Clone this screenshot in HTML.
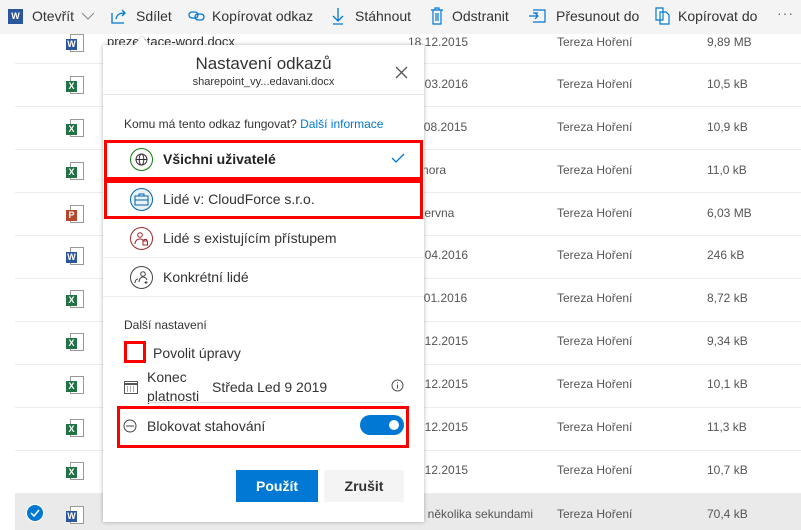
<!DOCTYPE html>
<html><head><meta charset="utf-8"><style>
*{margin:0;padding:0;box-sizing:border-box}
body{width:801px;height:530px;overflow:hidden;background:#fff;font-family:"Liberation Sans",sans-serif;color:#333;position:relative;font-size:13px}
.a{position:absolute;white-space:nowrap}
.tb{position:absolute;left:0;top:0;width:801px;height:34px;background:#f4f4f4;z-index:2}
.tb .a{top:8px;font-size:14px;color:#333}
.div{position:absolute;left:15px;width:786px;height:1px;background:#ececec}
.ic{position:absolute;width:14px;height:18px;border:1px solid #999;background:#fff}
.ic b{position:absolute;left:-5px;top:4px;width:11px;height:11px;color:#fff;font-size:9px;font-weight:bold;text-align:center;line-height:11px}
.cell{position:absolute;font-size:12px;color:#555}
.dlg{position:absolute;left:103px;top:45px;width:321px;height:477px;background:#fff;box-shadow:0 0 4px rgba(0,0,0,.3)}
.red{position:absolute;border:3px solid #f00}
.circ{position:absolute;width:23px;height:23px;border-radius:50%;border:1.5px solid}
</style></head><body>
<div class="tb">
<div class="a" style="left:8px;top:9px;width:15px;height:15px;background:#2b579a;color:#fff;font-size:9px;font-weight:bold;text-align:center;line-height:15px">W</div>
<div class="a" style="left:32px">Otevřít</div>
<svg class="a" style="left:81px;top:12px" width="14" height="8"><path d="M1 1l6 6 6-6" stroke="#888" fill="none"/></svg>
<svg class="a" style="left:111px;top:8px" width="16" height="16"><path d="M1 5v10h12M5 11c1-5 4-6 9-6M11 2l3 3-3 3" stroke="#0078d4" fill="none" stroke-width="1.3"/></svg>
<div class="a" style="left:136px">Sdílet</div>
<svg class="a" style="left:188px;top:11px" width="18" height="10"><rect x="1" y="1" width="9" height="6" rx="3" stroke="#0078d4" fill="none" stroke-width="1.3"/><rect x="7" y="3" width="9" height="6" rx="3" stroke="#0078d4" fill="none" stroke-width="1.3"/></svg>
<div class="a" style="left:212px">Kopírovat odkaz</div>
<svg class="a" style="left:332px;top:7px" width="12" height="18"><path d="M6 1v13M1 9l5 5 5-5M1 17h10" stroke="#0078d4" fill="none" stroke-width="1.3"/></svg>
<div class="a" style="left:355px">Stáhnout</div>
<svg class="a" style="left:430px;top:7px" width="14" height="18"><path d="M1 3h12M5 3V1h4v2M3 3v14h8V3M6 6v8M8 6v8" stroke="#0078d4" fill="none" stroke-width="1.2"/></svg>
<div class="a" style="left:452px">Odstranit</div>
<svg class="a" style="left:528px;top:9px" width="18" height="14"><path d="M5 1h12v12H5M1 7h9M7 4l3 3-3 3M5 4h5" stroke="#0078d4" fill="none" stroke-width="1.2"/></svg>
<div class="a" style="left:556px">Přesunout do</div>
<svg class="a" style="left:655px;top:7px" width="16" height="18"><path d="M1 1h7v12H1zM5 5h6l3 3v9H5z" stroke="#0078d4" fill="#fff" stroke-width="1.2"/></svg>
<div class="a" style="left:678px">Kopírovat do</div>
<div class="a" style="left:777px;top:5px;color:#666;letter-spacing:1px">···</div>
</div>

<div class="div" style="top:63px"></div><div class="div" style="top:106px"></div><div class="div" style="top:149px"></div><div class="div" style="top:192px"></div><div class="div" style="top:235px"></div><div class="div" style="top:278px"></div><div class="div" style="top:321px"></div><div class="div" style="top:364px"></div><div class="div" style="top:407px"></div><div class="div" style="top:450px"></div>
<div class="a" style="left:15px;top:493px;width:786px;height:37px;background:#eaeaea"></div>
<div class="a" style="left:26px;top:504px;width:18px;height:18px;border-radius:50%;background:#0078d4;border:1px solid #fff"></div>
<svg class="a" style="left:29px;top:508px" width="12" height="10"><path d="M2 5l3 3 5-6" stroke="#fff" fill="none" stroke-width="1.5"/></svg>

<div class="ic" style="left:70px;top:34px"><b style="background:#2b579a">W</b></div>
<div class="ic" style="left:70px;top:76px"><b style="background:#217346">X</b></div>
<div class="ic" style="left:70px;top:119px"><b style="background:#217346">X</b></div>
<div class="ic" style="left:70px;top:162px"><b style="background:#217346">X</b></div>
<div class="ic" style="left:70px;top:205px"><b style="background:#b7472a">P</b></div>
<div class="ic" style="left:70px;top:247px"><b style="background:#2b579a">W</b></div>
<div class="ic" style="left:70px;top:290px"><b style="background:#217346">X</b></div>
<div class="ic" style="left:70px;top:333px"><b style="background:#217346">X</b></div>
<div class="ic" style="left:70px;top:376px"><b style="background:#217346">X</b></div>
<div class="ic" style="left:70px;top:419px"><b style="background:#217346">X</b></div>
<div class="ic" style="left:70px;top:462px"><b style="background:#217346">X</b></div>
<div class="ic" style="left:70px;top:506px"><b style="background:#2b579a">W</b></div>

<div class="cell" style="left:107px;top:34px;font-size:13px;color:#333">prezentace-word.docx</div>
<div class="cell" style="left:408px;top:35px">18.12.2015</div>
<div class="cell" style="left:408px;top:77px">15.03.2016</div>
<div class="cell" style="left:408px;top:120px">11.08.2015</div>
<div class="cell" style="left:402px;top:163px">3. února</div>
<div class="cell" style="left:405px;top:206px">2. června</div>
<div class="cell" style="left:408px;top:248px">14.04.2016</div>
<div class="cell" style="left:408px;top:291px">11.01.2016</div>
<div class="cell" style="left:408px;top:334px">18.12.2015</div>
<div class="cell" style="left:408px;top:377px">18.12.2015</div>
<div class="cell" style="left:408px;top:420px">18.12.2015</div>
<div class="cell" style="left:408px;top:463px">18.12.2015</div>
<div class="cell" style="left:399px;top:507px">Před několika sekundami</div>
<div class="cell" style="left:557px;top:35px">Tereza Hoření</div><div class="cell" style="left:707px;top:35px">9,89 MB</div>
<div class="cell" style="left:557px;top:77px">Tereza Hoření</div><div class="cell" style="left:707px;top:77px">10,5 kB</div>
<div class="cell" style="left:557px;top:120px">Tereza Hoření</div><div class="cell" style="left:707px;top:120px">10,9 kB</div>
<div class="cell" style="left:557px;top:163px">Tereza Hoření</div><div class="cell" style="left:707px;top:163px">11,0 kB</div>
<div class="cell" style="left:557px;top:206px">Tereza Hoření</div><div class="cell" style="left:707px;top:206px">6,03 MB</div>
<div class="cell" style="left:557px;top:248px">Tereza Hoření</div><div class="cell" style="left:707px;top:248px">246 kB</div>
<div class="cell" style="left:557px;top:291px">Tereza Hoření</div><div class="cell" style="left:707px;top:291px">8,72 kB</div>
<div class="cell" style="left:557px;top:334px">Tereza Hoření</div><div class="cell" style="left:707px;top:334px">9,34 kB</div>
<div class="cell" style="left:557px;top:377px">Tereza Hoření</div><div class="cell" style="left:707px;top:377px">10,1 kB</div>
<div class="cell" style="left:557px;top:420px">Tereza Hoření</div><div class="cell" style="left:707px;top:420px">11,3 kB</div>
<div class="cell" style="left:557px;top:463px">Tereza Hoření</div><div class="cell" style="left:707px;top:463px">10,7 kB</div>
<div class="cell" style="left:557px;top:507px">Tereza Hoření</div><div class="cell" style="left:707px;top:507px">70,4 kB</div>

<div class="dlg"></div>
<div class="a" style="left:137px;top:39px;width:10px;height:10px;background:#fff;transform:rotate(45deg);box-shadow:-1px -1px 2px rgba(0,0,0,.15)"></div>
<div class="a" style="left:103px;top:54px;width:321px;text-align:center;font-size:17px;color:#333">Nastavení odkazů</div>
<div class="a" style="left:103px;top:76px;width:321px;text-align:center;font-size:11px;color:#333">sharepoint_vy...edavani.docx</div>
<svg class="a" style="left:395px;top:66px" width="13" height="13"><path d="M1 1l11 11M12 1L1 12" stroke="#555" stroke-width="1.3"/></svg>
<div class="a" style="left:103px;top:94px;width:321px;height:1px;background:#e5e5e5"></div>
<div class="a" style="left:124px;top:117px;font-size:12px;color:#333">Komu má tento odkaz fungovat? <span style="color:#0078d4">Další informace</span></div>

<div class="circ" style="left:130px;top:148px;border-color:#107c10"></div>
<svg class="a" style="left:134px;top:152px" width="15" height="15"><circle cx="7.5" cy="7.5" r="5.5" stroke="#333" fill="none"/><ellipse cx="7.5" cy="7.5" rx="2.3" ry="5.5" stroke="#333" fill="none"/><path d="M2 7.5h11" stroke="#333"/></svg>
<div class="a" style="left:163px;top:151px;font-size:14px;font-weight:bold;color:#222">Všichni uživatelé</div>
<svg class="a" style="left:391px;top:153px" width="14" height="10"><path d="M1 5l4 4 8-8" stroke="#0078d4" fill="none" stroke-width="1.3"/></svg>

<div class="circ" style="left:130px;top:188px;border-color:#0063b1;background:#eaf1f8"></div>
<svg class="a" style="left:134px;top:193px" width="15" height="13"><rect x="1" y="3" width="13" height="9" stroke="#0063b1" fill="none"/><path d="M5 3V1h5v2M1 7h13" stroke="#0063b1" fill="none"/></svg>
<div class="a" style="left:163px;top:191px;font-size:14px;color:#333">Lidé v: CloudForce s.r.o.</div>
<div class="a" style="left:103px;top:218px;width:321px;height:1px;background:#eee"></div>
<div class="circ" style="left:130px;top:227px;border-color:#a4262c"></div>
<svg class="a" style="left:134px;top:231px" width="15" height="15"><circle cx="6" cy="4" r="2.3" stroke="#a4262c" fill="none"/><path d="M1 13c0-3 2-5 5-5 1.5 0 2.5.5 3 1.5" stroke="#a4262c" fill="none"/><rect x="9" y="10" width="4.5" height="4" stroke="#a4262c" fill="none"/><path d="M10 10V8.5h2.5V10" stroke="#a4262c" fill="none"/></svg>
<div class="a" style="left:163px;top:230px;font-size:14px;color:#333">Lidé s existujícím přístupem</div>
<div class="a" style="left:103px;top:257px;width:321px;height:1px;background:#eee"></div>
<div class="circ" style="left:130px;top:266px;border-color:#444"></div>
<svg class="a" style="left:134px;top:270px" width="15" height="15"><circle cx="9" cy="4" r="2.3" stroke="#444" fill="none"/><path d="M5 12c0-3 2-5 4-5s3 1 4 3M1 13c0-2 1-4 3-4M12 11v3M10.5 12.5h3" stroke="#444" fill="none"/></svg>
<div class="a" style="left:163px;top:269px;font-size:14px;color:#333">Konkrétní lidé</div>
<div class="a" style="left:103px;top:296px;width:321px;height:1px;background:#eee"></div>

<div class="red" style="left:104px;top:140px;width:319px;height:40px"></div>
<div class="red" style="left:104px;top:180px;width:319px;height:39px"></div>

<div class="a" style="left:124px;top:318px;font-size:12px;color:#333">Další nastavení</div>
<div class="red" style="left:124px;top:341px;width:22px;height:22px"></div>
<div class="a" style="left:153px;top:345px;font-size:14px;color:#333">Povolit úpravy</div>
<svg class="a" style="left:124px;top:380px" width="15" height="14"><rect x="0.5" y="1.5" width="13" height="12" stroke="#555" fill="none"/><path d="M1 4h13" stroke="#555" stroke-width="2"/><path d="M3 7h1M6 7h1M9 7h1M3 9h1M6 9h1M9 9h1M3 11h1M6 11h1M9 11h1" stroke="#555"/></svg>
<div class="a" style="left:147px;top:368px;font-size:14px;color:#333;line-height:19px">Konec<br>platnosti</div>
<div class="a" style="left:212px;top:379px;font-size:14px;color:#333">Středa Led 9 2019</div>
<svg class="a" style="left:391px;top:379px" width="13" height="13"><circle cx="6.5" cy="6.5" r="5.5" stroke="#555" fill="none"/><path d="M6.5 5.5v4M6.5 3.3v1" stroke="#555"/></svg>
<div class="a" style="left:147px;top:402px;width:257px;height:1px;background:#ddd"></div>

<div class="red" style="left:117px;top:406px;width:292px;height:42px"></div>
<svg class="a" style="left:123px;top:419px" width="14" height="14"><circle cx="7" cy="7" r="6" stroke="#444" fill="none"/><path d="M3 7h8" stroke="#444"/></svg>
<div class="a" style="left:147px;top:418px;font-size:14px;color:#333">Blokovat stahování</div>
<div class="a" style="left:360px;top:415px;width:44px;height:20px;border-radius:10px;background:#0078d4"></div>
<div class="a" style="left:389px;top:420px;width:10px;height:10px;border-radius:50%;background:#fff"></div>

<div class="a" style="left:236px;top:470px;width:82px;height:32px;background:#0078d4;color:#fff;font-weight:bold;font-size:14px;text-align:center;line-height:32px">Použít</div>
<div class="a" style="left:324px;top:470px;width:80px;height:32px;background:#f4f4f4;color:#333;font-weight:bold;font-size:14px;text-align:center;line-height:32px">Zrušit</div>
</body></html>
